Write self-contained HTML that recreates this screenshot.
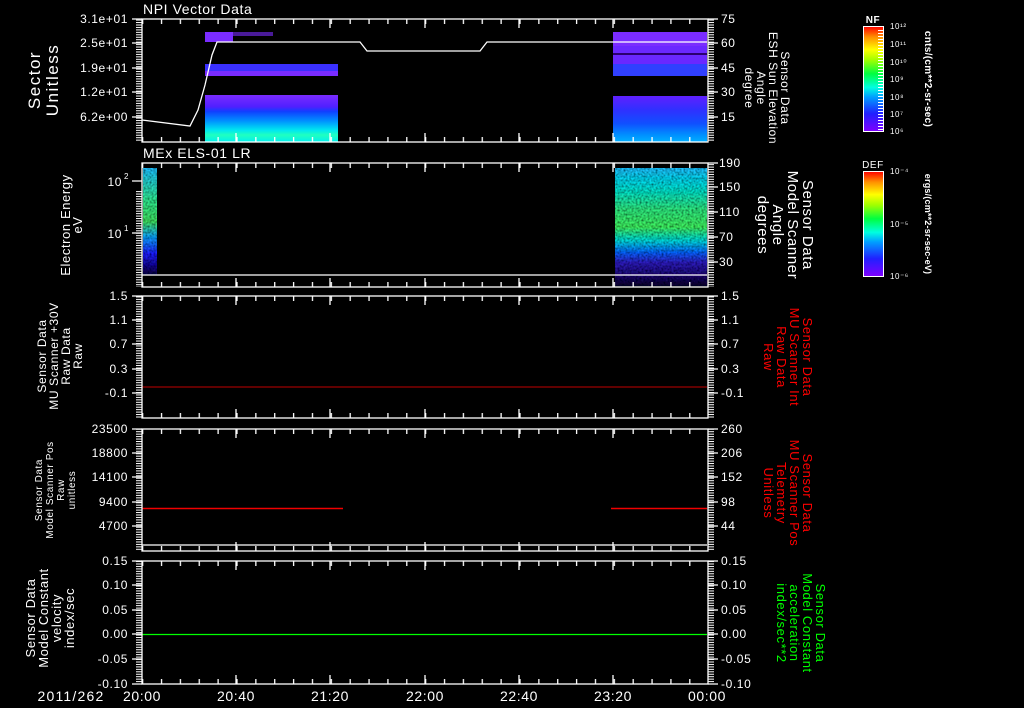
<!DOCTYPE html>
<html><head><meta charset="utf-8"><style>
html,body{margin:0;padding:0;background:#000;width:1024px;height:708px;overflow:hidden}
svg{display:block}
text{font-family:"Liberation Sans",sans-serif;fill:#fff;letter-spacing:0.6px}
</style></head><body>
<svg width="1024" height="708" viewBox="0 0 1024 708" xmlns="http://www.w3.org/2000/svg">
<defs>
<pattern id="xmin" x="142" y="0" width="18.867" height="708" patternUnits="userSpaceOnUse"><rect x="0" y="0" width="1.3" height="708" fill="#fff"/></pattern>
<pattern id="ymin" x="0" y="0" width="1024" height="2.45" patternUnits="userSpaceOnUse"><rect x="0" y="0" width="1024" height="1" fill="#fff"/></pattern>
<pattern id="cbt" x="0" y="0" width="10" height="3" patternUnits="userSpaceOnUse"><rect x="0" y="0" width="10" height="1" fill="#fff"/></pattern>
<linearGradient id="rb" x1="0" y1="1" x2="0" y2="0">
<stop offset="0" stop-color="#8000ff"/><stop offset="0.17" stop-color="#2020ff"/><stop offset="0.33" stop-color="#00a0ff"/><stop offset="0.42" stop-color="#00ffe0"/><stop offset="0.55" stop-color="#00ff40"/><stop offset="0.68" stop-color="#a0ff00"/><stop offset="0.78" stop-color="#ffff00"/><stop offset="0.9" stop-color="#ff9000"/><stop offset="1" stop-color="#ff0000"/></linearGradient>
<linearGradient id="b3" x1="0" y1="0" x2="0" y2="1">
<stop offset="0" stop-color="#7a2cff"/><stop offset="0.25" stop-color="#5020ff"/><stop offset="0.35" stop-color="#1040ff"/><stop offset="0.55" stop-color="#0090ff"/><stop offset="0.75" stop-color="#00e8f0"/><stop offset="0.85" stop-color="#20ffc0"/><stop offset="1" stop-color="#00f0f0"/></linearGradient>
<linearGradient id="b3r" x1="0" y1="0" x2="0" y2="1">
<stop offset="0" stop-color="#6020ff"/><stop offset="0.3" stop-color="#3030ff"/><stop offset="0.6" stop-color="#1050ff"/><stop offset="0.85" stop-color="#0090ff"/><stop offset="1" stop-color="#00b0ff"/></linearGradient>
<linearGradient id="s2r" x1="0" y1="0" x2="0" y2="1">
<stop offset="0" stop-color="#20c0ff"/><stop offset="0.15" stop-color="#00e0e0"/><stop offset="0.35" stop-color="#30e880"/><stop offset="0.5" stop-color="#40f060"/><stop offset="0.62" stop-color="#00d8e0"/><stop offset="0.72" stop-color="#1060ff"/><stop offset="0.8" stop-color="#3020c0"/><stop offset="1" stop-color="#100030"/></linearGradient>
<linearGradient id="s2l" x1="0" y1="0" x2="0" y2="1">
<stop offset="0" stop-color="#20c0ff"/><stop offset="0.3" stop-color="#30e890"/><stop offset="0.5" stop-color="#40e060"/><stop offset="0.65" stop-color="#10a0ff"/><stop offset="0.8" stop-color="#2020ff"/><stop offset="1" stop-color="#100040"/></linearGradient>
<filter id="nz"><feTurbulence type="fractalNoise" baseFrequency="0.5" numOctaves="1" seed="3"/><feColorMatrix values="0 0 0 0 0  0 0 0 0 0  0 0 0 0 0  0 0 0 -1.6 1.1"/><feComposite in2="SourceGraphic" operator="in"/><feMerge><feMergeNode in="SourceGraphic"/><feMergeNode/></feMerge></filter>
</defs>

<rect x="205" y="32" width="28" height="10" fill="#7a2cff"/>
<rect x="233" y="32" width="40" height="4" fill="#7a2cff" opacity=".6"/>
<rect x="205" y="64" width="133" height="7" fill="#3a30ff"/>
<rect x="205" y="71" width="133" height="5" fill="#7a2cff"/>
<rect x="205" y="95" width="133" height="47" fill="url(#b3)"/>
<rect x="613" y="32" width="94" height="14" fill="#7a2cff"/>
<rect x="613" y="46" width="94" height="18" fill="#6a28ff"/>
<rect x="613" y="53" width="94" height="2" fill="#2a0070"/>
<rect x="613" y="64" width="94" height="12" fill="#3040ff"/>
<rect x="613" y="96" width="94" height="46" fill="url(#b3r)"/>
<polyline points="142,120 190,126 198,110 205,85 212,55 217,42 360,42 367,51 480,51 487,42 707,42" fill="none" stroke="#fff" stroke-width="1.3"/>

<rect x="143" y="168" width="14" height="107" fill="url(#s2l)" filter="url(#nz)"/>
<rect x="615" y="168" width="92" height="118" fill="url(#s2r)" filter="url(#nz)"/>
<line x1="142" y1="275" x2="707" y2="275" stroke="#fff" stroke-width="1.3"/>

<line x1="142" y1="387" x2="707" y2="387" stroke="#c00000" stroke-width="1"/>
<line x1="142" y1="508.5" x2="343" y2="508.5" stroke="#f00000" stroke-width="1.5"/>
<line x1="611" y1="508.5" x2="707" y2="508.5" stroke="#f00000" stroke-width="1.5"/>
<line x1="142" y1="545" x2="707" y2="545" stroke="#fff" stroke-width="1.3"/>
<line x1="142" y1="634.5" x2="707" y2="634.5" stroke="#00ff00" stroke-width="1.3"/>

<g fill="none" stroke="#fff" stroke-width="1.3">
<rect x="142" y="19" width="566" height="123"/>
<rect x="142" y="163" width="566" height="124"/>
<rect x="142" y="296" width="566" height="122"/>
<rect x="142" y="429" width="566" height="122"/>
<rect x="142" y="561" width="566" height="123"/>
</g>
<g fill="url(#xmin)">
<rect x="142" y="19" width="566" height="5"/><rect x="142" y="137" width="566" height="5"/>
<rect x="142" y="163" width="566" height="5"/><rect x="142" y="282" width="566" height="5"/>
<rect x="142" y="296" width="566" height="5"/><rect x="142" y="413" width="566" height="5"/>
<rect x="142" y="429" width="566" height="5"/><rect x="142" y="546" width="566" height="5"/>
<rect x="142" y="561" width="566" height="5"/><rect x="142" y="679" width="566" height="5"/>
</g>
<g stroke="#fff" stroke-width="1.3">
<path d="M236 19v9M330 19v9M425 19v9M519 19v9M613 19v9M236 142v-9M330 142v-9M425 142v-9M519 142v-9M613 142v-9
M236 163v9M330 163v9M425 163v9M519 163v9M613 163v9M236 287v-9M330 287v-9M425 287v-9M519 287v-9M613 287v-9
M236 296v9M330 296v9M425 296v9M519 296v9M613 296v9M236 418v-9M330 418v-9M425 418v-9M519 418v-9M613 418v-9
M236 429v9M330 429v9M425 429v9M519 429v9M613 429v9M236 551v-9M330 551v-9M425 551v-9M519 551v-9M613 551v-9
M236 561v9M330 561v9M425 561v9M519 561v9M613 561v9M236 684v-9M330 684v-9M425 684v-9M519 684v-9M613 684v-9"/>
<path d="M132 19h10M132 43h10M132 68h10M132 92h10M132 117h10M708 19h10M708 43h10M708 68h10M708 92h10M708 117h10
M132 181h10M132 233h10M708 163h10M708 187h10M708 212h10M708 237h10M708 262h10
M132 296h10M132 320h10M132 344h10M132 369h10M132 393h10M708 296h10M708 320h10M708 344h10M708 369h10M708 393h10
M132 429h10M132 453h10M132 477h10M132 502h10M132 526h10M708 429h10M708 453h10M708 477h10M708 502h10M708 526h10
M132 561h10M132 585h10M132 610h10M132 634h10M132 659h10M132 684h10M708 561h10M708 585h10M708 610h10M708 634h10M708 659h10M708 684h10"/>
</g>
<g fill="url(#ymin)">
<rect x="136" y="19" width="6" height="123"/><rect x="708" y="19" width="6" height="123"/>
<rect x="136" y="190" width="6" height="97"/><rect x="708" y="163" width="6" height="124"/>
<rect x="136" y="296" width="6" height="122"/><rect x="708" y="296" width="6" height="122"/>
<rect x="136" y="429" width="6" height="122"/><rect x="708" y="429" width="6" height="122"/>
<rect x="136" y="561" width="6" height="123"/><rect x="708" y="561" width="6" height="123"/>
</g>

<text x="143" y="14" font-size="14">NPI Vector Data</text>
<text x="143" y="158" font-size="14">MEx ELS-01 LR</text>

<g font-size="12" text-anchor="end">
<text x="128" y="23">3.1e+01</text><text x="128" y="47">2.5e+01</text><text x="128" y="72">1.9e+01</text><text x="128" y="96">1.2e+01</text><text x="128" y="121">6.2e+00</text>
<text x="122" y="186">10</text><text x="129" y="179" font-size="8">2</text>
<text x="122" y="238">10</text><text x="129" y="231" font-size="8">1</text>
<text x="128" y="300">1.5</text><text x="128" y="324">1.1</text><text x="128" y="348">0.7</text><text x="128" y="373">0.3</text><text x="128" y="397">-0.1</text>
<text x="128" y="433">23500</text><text x="128" y="457">18800</text><text x="128" y="481">14100</text><text x="128" y="506">9400</text><text x="128" y="530">4700</text>
<text x="128" y="565">0.15</text><text x="128" y="589">0.10</text><text x="128" y="614">0.05</text><text x="128" y="638">0.00</text><text x="128" y="663">-0.05</text><text x="128" y="688">-0.10</text>
</g>
<g font-size="12">
<text x="721" y="23">75</text><text x="721" y="47">60</text><text x="721" y="72">45</text><text x="721" y="96">30</text><text x="721" y="121">15</text>
<text x="719" y="167">190</text><text x="719" y="191">150</text><text x="719" y="216">110</text><text x="719" y="241">70</text><text x="719" y="266">30</text>
<text x="721" y="300">1.5</text><text x="721" y="324">1.1</text><text x="721" y="348">0.7</text><text x="721" y="373">0.3</text><text x="721" y="397">-0.1</text>
<text x="721" y="433">260</text><text x="721" y="457">206</text><text x="721" y="481">152</text><text x="721" y="506">98</text><text x="721" y="530">44</text>
<text x="721" y="565">0.15</text><text x="721" y="589">0.10</text><text x="721" y="614">0.05</text><text x="721" y="638">0.00</text><text x="721" y="663">-0.05</text><text x="721" y="688">-0.10</text>
</g>
<g font-size="14" text-anchor="middle">
<text x="71" y="701" style="letter-spacing:1.2px">2011/262</text><text x="142" y="701">20:00</text><text x="236" y="701">20:40</text><text x="330" y="701">21:20</text><text x="425" y="701">22:00</text><text x="519" y="701">22:40</text><text x="613" y="701">23:20</text><text x="707" y="701">00:00</text>
</g>

<g text-anchor="middle">
<text transform="translate(40,80) rotate(-90)" font-size="17" style="letter-spacing:1.5px">Sector</text>
<text transform="translate(58,80) rotate(-90)" font-size="17" style="letter-spacing:1.5px">Unitless</text>
<text transform="translate(70,225) rotate(-90)" font-size="13">Electron Energy</text>
<text transform="translate(82,225) rotate(-90)" font-size="13">eV</text>
<text transform="translate(46,356) rotate(-90)" font-size="12">Sensor Data</text>
<text transform="translate(58,356) rotate(-90)" font-size="12">MU Scanner +30V</text>
<text transform="translate(70,356) rotate(-90)" font-size="12">Raw Data</text>
<text transform="translate(82,356) rotate(-90)" font-size="12">Raw</text>
<text transform="translate(42,490) rotate(-90)" font-size="10">Sensor Data</text>
<text transform="translate(53,490) rotate(-90)" font-size="10">Model Scanner Pos</text>
<text transform="translate(64,490) rotate(-90)" font-size="10">Raw</text>
<text transform="translate(75,490) rotate(-90)" font-size="10">unitless</text>
<text transform="translate(35,618) rotate(-90)" font-size="13">Sensor Data</text>
<text transform="translate(48,618) rotate(-90)" font-size="13">Model Constant</text>
<text transform="translate(61,618) rotate(-90)" font-size="13">velocity</text>
<text transform="translate(74,618) rotate(-90)" font-size="13">index/sec</text>
</g>
<g text-anchor="middle">
<text transform="translate(781,88) rotate(90)" font-size="12">Sensor Data</text>
<text transform="translate(769,88) rotate(90)" font-size="12">ESH Sun Elevation</text>
<text transform="translate(757,88) rotate(90)" font-size="12">Angle</text>
<text transform="translate(745,88) rotate(90)" font-size="12">degree</text>
<text transform="translate(803,225) rotate(90)" font-size="15">Sensor Data</text>
<text transform="translate(788,225) rotate(90)" font-size="15">Model Scanner</text>
<text transform="translate(773,225) rotate(90)" font-size="15">Angle</text>
<text transform="translate(758,225) rotate(90)" font-size="15">degrees</text>
<text transform="translate(803,357) rotate(90)" font-size="13" style="fill:#f00">Sensor Data</text>
<text transform="translate(790,357) rotate(90)" font-size="13" style="fill:#f00">MU Scanner Int</text>
<text transform="translate(777,357) rotate(90)" font-size="13" style="fill:#f00">Raw Data</text>
<text transform="translate(764,357) rotate(90)" font-size="13" style="fill:#f00">Raw</text>
<text transform="translate(803,493) rotate(90)" font-size="13" style="fill:#f00">Sensor Data</text>
<text transform="translate(790,493) rotate(90)" font-size="13" style="fill:#f00">MU Scanner Pos</text>
<text transform="translate(777,493) rotate(90)" font-size="13" style="fill:#f00">Telemetry</text>
<text transform="translate(764,493) rotate(90)" font-size="13" style="fill:#f00">Unitless</text>
<text transform="translate(816,623) rotate(90)" font-size="13" style="fill:#00ff00">Sensor Data</text>
<text transform="translate(803,623) rotate(90)" font-size="13" style="fill:#00ff00">Model Constant</text>
<text transform="translate(790,623) rotate(90)" font-size="13" style="fill:#00ff00">acceleration</text>
<text transform="translate(777,623) rotate(90)" font-size="13" style="fill:#00ff00">index/sec**2</text>
</g>

<rect x="863.5" y="26.5" width="20" height="105" fill="url(#rb)" stroke="#fff" stroke-width="1"/>
<rect x="878" y="28" width="5" height="102" fill="url(#cbt)"/>
<text x="873" y="23" font-size="10" text-anchor="middle" font-weight="bold">NF</text>
<g font-size="8">
<text x="890" y="29">10¹²</text><text x="890" y="47">10¹¹</text><text x="890" y="65">10¹⁰</text><text x="890" y="82">10⁹</text><text x="890" y="100">10⁸</text><text x="890" y="117">10⁷</text><text x="890" y="134">10⁶</text>
</g>
<text transform="translate(925,79) rotate(90)" font-size="10" font-weight="bold" text-anchor="middle" style="letter-spacing:0.3px">cnts/(cm**2-sr-sec)</text>

<rect x="863.5" y="171.5" width="20" height="105" fill="url(#rb)" stroke="#fff" stroke-width="1"/>
<text x="873" y="168" font-size="10" text-anchor="middle">DEF</text>
<g font-size="8">
<text x="890" y="174">10⁻⁴</text><text x="890" y="227">10⁻⁵</text><text x="890" y="279">10⁻⁶</text>
</g>
<text transform="translate(925,224) rotate(90)" font-size="9" font-weight="bold" text-anchor="middle" style="letter-spacing:0.2px">ergs/(cm**2-sr-sec-eV)</text>
</svg>
</body></html>
